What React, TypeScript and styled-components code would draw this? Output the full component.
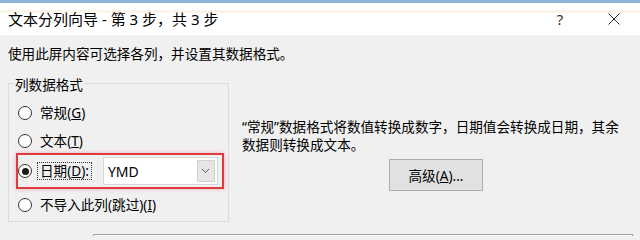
import styled, { createGlobalStyle } from 'styled-components'

const GlobalStyle = createGlobalStyle`
  body {
    margin: 0;
    background: #f0f0f0;
    font-family: "Noto Sans", "Noto Sans CJK SC", sans-serif;
  }
`

const Radio = ({ checked }: { checked?: boolean }) => (
  <RadioCircle>{checked && <RadioDot />}</RadioCircle>
)

const Chevron = () => (
  <svg width='9' height='6' viewBox='0 0 9 6'>
    <path d='M1 1l3.5 3.5L8 1' fill='none' stroke='#555' strokeWidth='1' />
  </svg>
)

const CloseIcon = () => (
  <svg width='12' height='12' viewBox='0 0 12 12'>
    <path d='M0.5 0.5l11 11M11.5 0.5l-11 11' stroke='#333' strokeWidth='1' />
  </svg>
)

const App = () => {
  return (
    <Window>
      <GlobalStyle />
      <TitleBar>
        <Title>文本分列向导 - 第 3 步，共 3 步</Title>
        <Caption>
          <CaptionButton>?</CaptionButton>
          <CaptionButton>
            <CloseIcon />
          </CaptionButton>
        </Caption>
      </TitleBar>
      <Body>
        <Intro>使用此屏内容可选择各列，并设置其数据格式。</Intro>
        <Main>
          <Group>
            <Legend>列数据格式</Legend>
            <Option>
              <Radio />
              <OptionLabel>
                常规(<u>G</u>)
              </OptionLabel>
            </Option>
            <Option>
              <Radio />
              <OptionLabel>
                文本(<u>T</u>)
              </OptionLabel>
            </Option>
            <Option $highlight>
              <Radio checked />
              <OptionLabel $focused>
                日期(<u>D</u>):
              </OptionLabel>
              <Combo>
                <ComboText>YMD</ComboText>
                <ComboArrow>
                  <Chevron />
                </ComboArrow>
              </Combo>
            </Option>
            <Option $spaced>
              <Radio />
              <OptionLabel>
                不导入此列(跳过)(<u>I</u>)
              </OptionLabel>
            </Option>
          </Group>
          <Side>
            <Description>
              “常规”数据格式将数值转换成数字，日期值会转换成日期，其余
              <br />
              数据则转换成文本。
            </Description>
            <PushButton>
              高级(<u>A</u>)...
            </PushButton>
          </Side>
        </Main>
        {/* only the top edge of the destination field is inside the frame */}
        <DestRow>
          <DestInput />
        </DestRow>
      </Body>
    </Window>
  )
}

export default App

const Window = styled.div`
  width: 640px;
  height: 236px;
  overflow: hidden;
  background: #f0f0f0;
  color: #000;
`

const TitleBar = styled.div`
  height: 35px;
  box-sizing: border-box;
  border-top: 3px solid #8fb4da;
  background: linear-gradient(#fff 0 7px, #fcf5eb 7px 10px, #fff 10px);
  display: flex;
  align-items: center;
  justify-content: space-between;
  padding: 0 3px 1px 8px;
`

const Title = styled.div`
  font-size: 15px;
  line-height: 20px;
  white-space: nowrap;
`

const Caption = styled.div`
  display: flex;
  gap: 8px;
  align-self: stretch;
`

const CaptionButton = styled.div`
  width: 46px;
  display: flex;
  align-items: center;
  justify-content: center;
  font-size: 15px;
  color: #333;
`

const Body = styled.div`
  padding: 10px 0 0 8px;
  font-size: 13.6px;
`

const Intro = styled.div`
  line-height: 18px;
  white-space: nowrap;
`

const Main = styled.div`
  display: flex;
  margin-top: 20px;
`

const Group = styled.div`
  position: relative;
  width: 221px;
  box-sizing: border-box;
  border: 1px solid #dcdcdc;
  padding: 15px 6px 2px 9px;
`

const Legend = styled.span`
  position: absolute;
  top: -8px;
  left: 5px;
  padding: 0 1px;
  line-height: 18px;
  background: #f0f0f0;
`

const Option = styled.div<{ $highlight?: boolean; $spaced?: boolean }>`
  display: flex;
  align-items: center;
  height: ${(p) => (p.$highlight ? '32px' : '28px')};
  margin-top: ${(p) => (p.$spaced ? '4px' : '0')};
  box-shadow: ${(p) =>
    p.$highlight
      ? '0 0 0 2px #e0393e, 0 0 4px 2px rgba(224, 57, 62, 0.35)'
      : 'none'};
  white-space: nowrap;
`

const RadioCircle = styled.span`
  width: 14px;
  height: 14px;
  box-sizing: border-box;
  border: 1px solid #333;
  border-radius: 50%;
  background: #fff;
  display: flex;
  align-items: center;
  justify-content: center;
  flex-shrink: 0;
`

const RadioDot = styled.span`
  width: 7px;
  height: 7px;
  border-radius: 50%;
  background: #1a1a1a;
`

const OptionLabel = styled.span<{ $focused?: boolean }>`
  margin-left: 5px;
  padding: 0 2px;
  line-height: 16px;
  border: 1px ${(p) => (p.$focused ? 'dotted #333' : 'solid transparent')};
`

const Combo = styled.div`
  margin-left: 11px;
  width: 115px;
  height: 28px;
  box-sizing: border-box;
  border: 1px solid #d6d6d6;
  background: #fff;
  display: flex;
  align-items: stretch;
  padding: 2px;
`

const ComboText = styled.span`
  flex: 1;
  display: flex;
  align-items: center;
  padding-left: 2px;
  font-size: 14px;
`

const ComboArrow = styled.span`
  width: 18px;
  box-sizing: border-box;
  background: #e6e6e6;
  border: 1px solid #d2d2d2;
  display: flex;
  align-items: center;
  justify-content: center;
`

const Side = styled.div`
  flex: 1;
  display: flex;
  flex-direction: column;
  padding: 35px 10px 0 13px;
`

const Description = styled.div`
  line-height: 18px;
  white-space: nowrap;
`

const PushButton = styled.div`
  align-self: center;
  margin-top: 5px;
  width: 94px;
  height: 32px;
  box-sizing: border-box;
  border: 1px solid #adadad;
  background: #e1e1e1;
  display: flex;
  align-items: center;
  justify-content: center;
  white-space: nowrap;
`

const DestRow = styled.div`
  display: flex;
  margin-top: 12px;
  padding-left: 85px;
`

const DestInput = styled.div`
  flex: 1;
  height: 24px;
  margin-right: 7px;
  border: 1px solid #a0a0a0;
  background: #fff;
`
